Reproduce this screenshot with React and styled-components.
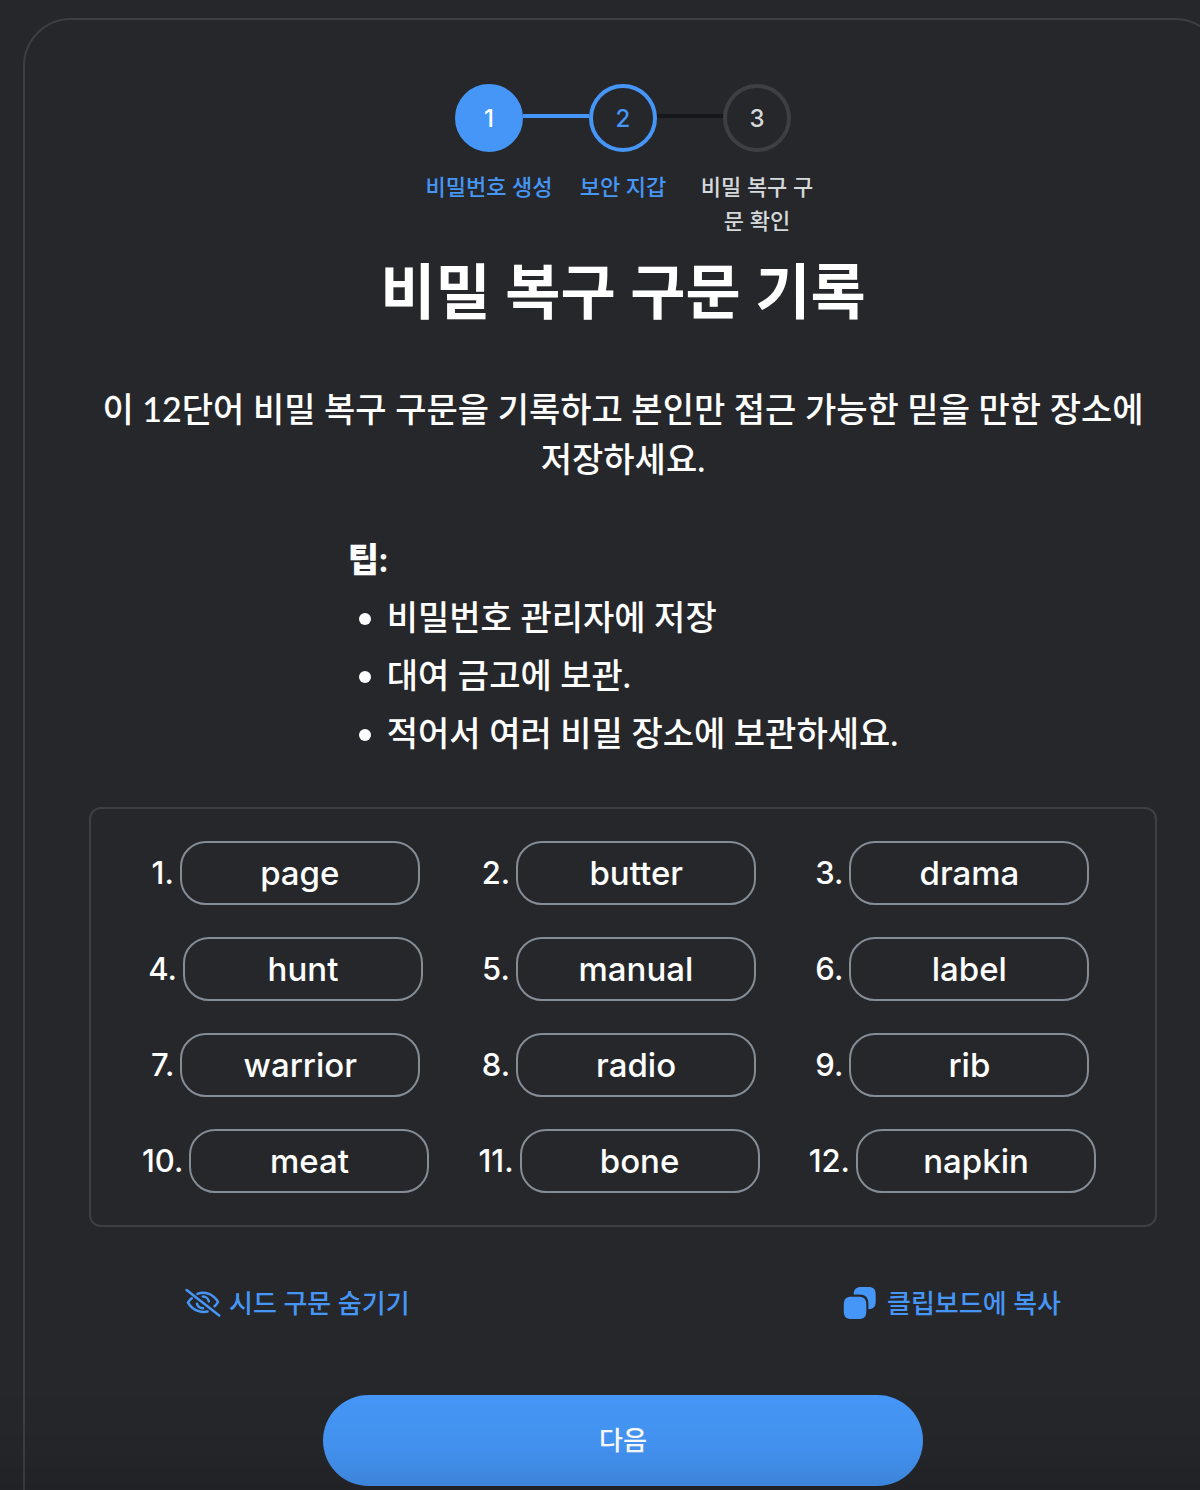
import React from "react";
import styled, { createGlobalStyle } from "styled-components";

const color = {
  background: "#26272b",
  border: "#3d3f43",
  chipBorder: "#848c96",
  primary: "#4596f6",
  line: "#161719",
  text: "#ffffff",
  muted: "#d6d9dc",
};

const koreanFont = `Lato, "Noto Sans CJK KR", sans-serif`;
const latinFont = `Inter, "Noto Sans CJK KR", sans-serif`;

const GlobalStyle = createGlobalStyle`
  *, *::before, *::after { box-sizing: border-box; }
  body {
    margin: 0;
    background: ${color.background};
    color: ${color.text};
    font-family: ${koreanFont};
    font-weight: 500;
    -webkit-font-smoothing: antialiased;
  }
`;

const Page = styled.div`
  min-height: 100vh;
  padding: 18px 0 24px;
  overflow-x: hidden;
`;

const Card = styled.main`
  display: flex;
  flex-direction: column;
  align-items: center;
  width: 100%;
  margin-left: 23px;
  padding: 64px;
  border: 2px solid ${color.border};
  border-radius: 48px;
`;

const Steps = styled.ol`
  display: flex;
  margin: 0;
  padding: 0;
  list-style: none;
`;

const Step = styled.li`
  display: flex;
  flex-direction: column;
  align-items: center;
  width: 134px;
  color: ${(p) => (p.$state === "todo" ? color.muted : color.primary)};
`;

const Track = styled.div`
  display: flex;
  align-items: center;
  width: 100%;
`;

const Connector = styled.span`
  flex: 1;
  height: 4px;
  margin-bottom: 4px;
  background: ${(p) => p.$color};
`;

const Circle = styled.span`
  display: flex;
  align-items: center;
  justify-content: center;
  width: 68px;
  height: 68px;
  padding-top: 2px;
  border: 4px solid ${(p) => (p.$state === "todo" ? color.border : color.primary)};
  border-radius: 50%;
  background: ${(p) => (p.$state === "done" ? color.primary : "transparent")};
  color: ${(p) => (p.$state === "done" ? color.text : "inherit")};
  font-family: ${latinFont};
  font-size: 24px;
  line-height: 34px;
`;

const StepLabel = styled.span`
  margin-top: 18px;
  padding: 0 3px;
  font-size: 22px;
  line-height: 34px;
  text-align: center;
`;

const Title = styled.h1`
  margin: 8px 0 0;
  font-size: 60px;
  font-weight: 700;
  line-height: 90px;
  text-align: center;
`;

const Description = styled.p`
  margin: 48px 0 0;
  font-size: 34px;
  line-height: 50px;
  text-align: center;
  word-break: keep-all;
`;

const Tips = styled.section`
  margin-top: 50px;
  font-size: 34px;
  line-height: 50px;
`;

const TipsTitle = styled.h2`
  margin: 0;
  font-size: 34px;
  font-weight: 900;
  line-height: 50px;
`;

const TipList = styled.ul`
  margin: 0;
  padding: 0;
  list-style: none;
`;

const Tip = styled.li`
  display: flex;
  align-items: center;
  gap: 16px;
  margin-top: 8px;
  padding-left: 11px;

  &::before {
    content: "";
    width: 12px;
    height: 12px;
    margin-top: 4px;
    border-radius: 50%;
    background: currentColor;
  }
`;

const Phrase = styled.ol`
  display: grid;
  grid-template-columns: repeat(3, 1fr);
  row-gap: 32px;
  width: 100%;
  margin: 49px 0 0;
  padding: 32px;
  border: 2px solid ${color.border};
  border-radius: 12px;
  list-style: none;
  font-family: ${latinFont};
`;

const Word = styled.li`
  display: flex;
  align-items: center;
  justify-content: center;
  gap: 6px;
  padding-right: 8px;
`;

const WordNumber = styled.span`
  font-size: 31px;
  line-height: 40px;
`;

const Chip = styled.span`
  display: flex;
  align-items: center;
  justify-content: center;
  width: 240px;
  height: 64px;
  border: 2px solid ${color.chipBorder};
  border-radius: 26px;
  font-size: 33px;
  line-height: 40px;
`;

const Actions = styled.div`
  display: flex;
  justify-content: space-between;
  width: 100%;
  margin-top: 48px;
  padding: 0 96px;
`;

const LinkButton = styled.button`
  display: flex;
  align-items: center;
  gap: 8px;
  padding: 8px 0;
  border: 0;
  background: none;
  color: ${color.primary};
  font-family: inherit;
  font-size: 26px;
  font-weight: 500;
  line-height: 40px;
  cursor: pointer;
`;

const NextButton = styled.button`
  width: 600px;
  max-width: 100%;
  height: 91px;
  margin-top: 64px;
  padding: 0 32px 2px;
  border: 0;
  border-radius: 46px;
  background: ${color.primary};
  color: ${color.text};
  font-family: inherit;
  font-size: 26px;
  font-weight: 500;
  line-height: 40px;
  cursor: pointer;
`;

const BottomShade = styled.div`
  position: fixed;
  right: 0;
  bottom: 0;
  left: 0;
  height: 96px;
  background: linear-gradient(rgba(0, 0, 0, 0), rgba(0, 0, 0, 0.03) 55%, rgba(0, 0, 0, 0.12));
  pointer-events: none;
`;

const EyeSlashIcon = () => (
  <svg width="36" height="34" viewBox="1 0 36 34" fill="none" stroke="currentColor" strokeWidth="2.5" strokeLinecap="round" aria-hidden="true">
    <path d="M2.6 4L35.2 29.6" />
    <path d="M13.4 7.8C21 5 29.6 8.2 34 16C33 17.8 32 19 30.6 20.2" />
    <path d="M7.8 12.2C6 13.6 4.9 14.9 4 16.4C8 24 16 27.2 23.6 25.5" />
    <path d="M18.8 10.4C22.2 10.6 24.6 13 24.8 15.4" />
    <path d="M13 17.8C13.6 20.4 16 22.2 19 22.2" />
  </svg>
);

const CopyIcon = () => (
  <svg width="36" height="34" viewBox="0 0 36 34" fill="currentColor" aria-hidden="true">
    <path d="M.8 18.5C.8 13 3 10.7 8.5 10.7H15.5C21 10.7 23.3 13 23.3 18.5V25.2C23.3 30.7 21 33 15.5 33H8.5C3 33 .8 30.7 .8 25.2Z" />
    <path d="M10.7 8.4C10.9 3.3 13 1 18.3 1H25.2C30.5 1 32.7 3.3 32.7 8.6V15.5C32.7 20.6 30.5 23 25.4 23.3V18C25.4 11.5 22.5 8.6 16 8.6H10.7Z" />
  </svg>
);

const steps = [
  { label: "비밀번호 생성", state: "done", before: "transparent", after: color.primary },
  { label: "보안 지갑", state: "current", before: color.primary, after: color.line },
  { label: "비밀 복구 구문 확인", state: "todo", before: color.line, after: "transparent" },
];

const tips = ["비밀번호 관리자에 저장", "대여 금고에 보관.", "적어서 여러 비밀 장소에 보관하세요."];

const words = [
  "page", "butter", "drama", "hunt", "manual", "label",
  "warrior", "radio", "rib", "meat", "bone", "napkin",
];

export default function App() {
  return (
    <>
      <GlobalStyle />
      <Page lang="ko">
        <Card>
          <Steps>
            {steps.map((step, i) => (
              <Step key={step.label} $state={step.state}>
                <Track>
                  <Connector $color={step.before} />
                  <Circle $state={step.state}>{i + 1}</Circle>
                  <Connector $color={step.after} />
                </Track>
                <StepLabel>{step.label}</StepLabel>
              </Step>
            ))}
          </Steps>
          <Title>비밀 복구 구문 기록</Title>
          <Description>
            이 12단어 비밀 복구 구문을 기록하고 본인만 접근 가능한 믿을 만한 장소에 저장하세요.
          </Description>
          <Tips>
            <TipsTitle>팁:</TipsTitle>
            <TipList>
              {tips.map((tip) => (
                <Tip key={tip}>{tip}</Tip>
              ))}
            </TipList>
          </Tips>
          <Phrase>
            {words.map((word, i) => (
              <Word key={word}>
                <WordNumber>{i + 1}.</WordNumber>
                <Chip>{word}</Chip>
              </Word>
            ))}
          </Phrase>
          <Actions>
            <LinkButton type="button">
              <EyeSlashIcon />
              시드 구문 숨기기
            </LinkButton>
            <LinkButton type="button">
              <CopyIcon />
              클립보드에 복사
            </LinkButton>
          </Actions>
          <NextButton type="button">다음</NextButton>
        </Card>
      </Page>
      <BottomShade />
    </>
  );
}
